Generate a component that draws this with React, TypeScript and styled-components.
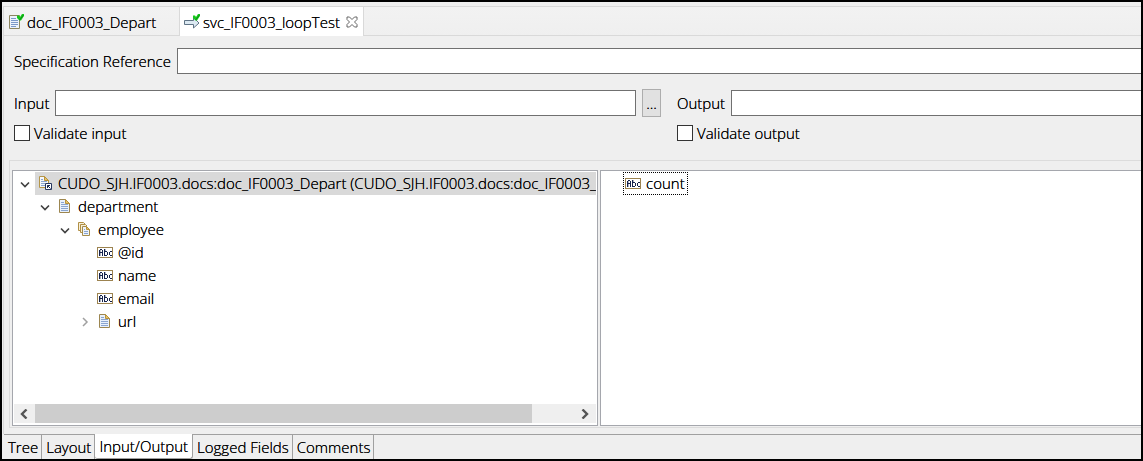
import React from 'react';
import styled, { createGlobalStyle, css } from 'styled-components';

const Global = createGlobalStyle`
  *, *::before, *::after { box-sizing: border-box; }
  body {
    margin: 0;
    background: #efefef;
    color: #000;
    font: 300 15px/22px "Open Sans", "Noto Sans CJK KR", sans-serif;
    text-shadow: 0 0 #000;
  }
  button, input { font: inherit; color: inherit; text-shadow: inherit; margin: 0; }
`;

const Frame = styled.div`
  display: flex;
  flex-direction: column;
  min-height: 100vh;
  border: 2px solid #000;
  padding: 4px 0 0 1px;
  overflow: hidden;
`;

const Editor = styled.section`
  flex: 1;
  display: flex;
  flex-direction: column;
  border-left: 1px solid #d9d9d9;
  border-top: 1px solid #d9d9d9;
`;

const EditorTabs = styled.div`
  display: flex;
  height: 29px;
  background: linear-gradient(#f2f2f2, #efefef);
  box-shadow: inset 0 -1px #d9d9d9;
`;

const EditorTab = styled.button<{ $active?: boolean }>`
  display: flex;
  align-items: center;
  gap: 3px;
  padding: 0 5px 0 4px;
  border: 0;
  background: transparent;
  white-space: nowrap;
  ${({ $active }) =>
    $active
      ? css`
          background: #fff;
          border: solid #d9d9d9;
          border-width: 0 1px;
        `
      : css`
          width: 175px;
        `}
`;

const CloseMark = styled.span`
  display: flex;
  margin-left: 3px;
`;

const Form = styled.div`
  display: grid;
  grid-template-columns: 647fr 464fr;
  column-gap: 16px;
  row-gap: 16px;
  padding: 12px 0 0 10px;
`;

const Field = styled.div<{ $wide?: boolean }>`
  display: flex;
  align-items: center;
  gap: 6px;
  height: 26px;
  min-width: 0;
  ${({ $wide }) => $wide && 'grid-column: 1 / -1;'}
`;

const FieldLabel = styled.label`
  flex: none;
  white-space: nowrap;
`;

const TextBox = styled.input<{ $open?: boolean }>`
  flex: 1;
  min-width: 0;
  height: 26px;
  padding: 0 4px;
  border: 1px solid #707070;
  ${({ $open }) => $open && 'border-right: 0;'}
  background: #fff;
  outline: 0;
`;

const BrowseButton = styled.button`
  width: 19px;
  height: 28px;
  padding: 0;
  border: 1px solid #adadad;
  background: #e1e1e1;
`;

const Check = styled.label`
  display: flex;
  align-items: center;
  gap: 4px;
  height: 22px;
  margin-top: -10px;
`;

const CheckBox = styled.input`
  appearance: none;
  width: 16px;
  height: 16px;
  border: 1px solid #333;
  background: #fff;
`;

const Group = styled.div`
  flex: 1;
  display: grid;
  grid-template-columns: 586fr 541fr;
  column-gap: 2px;
  margin: 16px 0 6px 5px;
  padding: 9px 0 1px 2px;
  border: solid #dcdcdc;
  border-width: 1px 0 1px 1px;
`;

const Pane = styled.div<{ $open?: boolean }>`
  display: flex;
  flex-direction: column;
  min-width: 0;
  padding: 1px;
  border: 1px solid #a5a7ad;
  ${({ $open }) => $open && 'border-right: 0;'}
  background: #fff;
`;

const Tree = styled.ul`
  flex: 1;
  margin: 0;
  padding: 0;
  overflow: hidden;
  list-style: none;
`;

const Row = styled.li<{ $level: number }>`
  display: flex;
  height: 23px;
  line-height: 20px;
  padding-left: ${({ $level }) => $level * 20}px;
`;

const Twisty = styled.span`
  flex: none;
  display: flex;
  align-items: center;
  justify-content: center;
  width: 21px;
`;

const Item = styled.span<{ $selected?: boolean; $focused?: boolean }>`
  flex: ${({ $selected }) => ($selected ? '1 0 auto' : 'none')};
  display: flex;
  align-items: center;
  gap: 5px;
  padding: 0 3px 1px 2px;
  background: ${({ $selected }) => ($selected ? '#d9d9d9' : 'transparent')};
  outline: ${({ $focused }) => ($focused ? '1px dotted #000' : '0')};
  outline-offset: -1px;
  white-space: nowrap;
`;

const ScrollBar = styled.div`
  display: flex;
  height: 19px;
  margin-bottom: 1px;
  background: #efefef;
`;

const ScrollButton = styled.button`
  display: flex;
  align-items: center;
  justify-content: center;
  width: 21px;
  padding: 0 2px 0 0;
  border: 0;
  background: transparent;
`;

const ScrollTrack = styled.div`
  flex: 1;
`;

const ScrollThumb = styled.div`
  width: 92%;
  height: 100%;
  background: #cdcdcd;
`;

const PageTabs = styled.div`
  display: flex;
  height: 25px;
  margin-left: 1px;
  border-top: 1px solid #a0a0a0;
`;

const PageTab = styled.button<{ $active?: boolean }>`
  padding: 0 3px 0 4px;
  border: 0;
  border-right: 1px solid #a0a0a0;
  background: transparent;
  white-space: nowrap;
  ${({ $active }) =>
    $active &&
    css`
      margin-top: -1px;
      padding: 0 4px;
      border-bottom: 1px solid #a0a0a0;
      border-radius: 0 0 3px 3px;
      background: #fff;
    `}
`;

const Tick = () => (
  <>
    <path d="M9 1.500h2l1 1.500 2-3h2v2l-3 4.500h-1.500L9 4z" fill="#16c81c" />
    <path d="M11.500 6 15.500 1" stroke="#0a8f14" fill="none" />
  </>
);

const DocTabIcon = () => (
  <svg width="16" height="16" viewBox="0 0 16 16">
    <path d="M1.500 1.500h10v13h-10z" fill="#edf3fb" stroke="#8d8660" />
    <path d="M3 4.500h5M3 6.500h7M3 8.500h7M3 10.500h7M3 12.500h5" stroke="#7c99c8" />
    <Tick />
  </svg>
);

const ServiceIcon = () => (
  <svg width="16" height="16" viewBox="0 0 16 16">
    <path d="M.5 6.500h9v-3l5.500 5.500-5.500 5v-3.500h-9z" fill="#dce9f2" stroke="#5f7385" />
    <Tick />
  </svg>
);

const CloseIcon = () => (
  <svg width="12" height="12" viewBox="0 0 12 12">
    <path
      d="M1 1h2.500L6 3.500 8.500 1H11v2.500L8.500 6 11 8.500V11H8.500L6 8.500 3.500 11H1V8.500L3.500 6 1 3.500z"
      fill="#fff"
      stroke="#666"
    />
  </svg>
);

const PageIcon = () => (
  <svg width="16" height="16" viewBox="0 0 16 16">
    <path d="M2.500 1.500h6l4 4v9h-10z" fill="#e9f1fb" stroke="#9c8650" />
    <path d="M8.500 1.500v4h4z" fill="#e5c36a" stroke="#b8923c" />
    <path d="M4 4.500h3M4 6.500h7M4 8.500h7M4 10.500h7M4 12.500h7" stroke="#8aa5d0" />
  </svg>
);

const PageRefIcon = () => (
  <svg width="16" height="16" viewBox="0 0 16 16">
    <path d="M2.500 1.500h5l4 4v7h-9z" fill="#f4f7fc" stroke="#b49548" />
    <path d="M7.500 1.500v4h4z" fill="#e5c36a" stroke="#b8923c" />
    <path d="M4 4.500h2M4 6.500h6M4 8.500h4M4 10.500h4" stroke="#8aa5d0" />
    <path d="M8.500 8.500h6v6h-6z" fill="#fff" stroke="#26365f" />
    <path d="M10.500 13v-2.500H13M10.500 10.500l3 3" fill="none" stroke="#17264f" />
  </svg>
);

const PagesIcon = () => (
  <svg width="16" height="16" viewBox="0 0 16 16">
    <path d="M3.500 9.500h-2v-8h5l1.500 1.500" fill="#f7efd8" stroke="#b08f45" />
    <path d="M5.500 11.500h-2v-8h5l1.500 1.500" fill="#f7efd8" stroke="#b08f45" />
    <path d="M5.500 5.500h4l3 3v6h-7z" fill="#edf3fb" stroke="#a58c4c" />
    <path d="M9.500 5.500v3h3z" fill="#e5c36a" stroke="#b8923c" />
    <path d="M7 8.500h1M7 10.500h4M7 12.500h4" stroke="#8aa5d0" />
  </svg>
);

const AbcIcon = () => (
  <svg width="16" height="16" viewBox="0 0 16 16" shapeRendering="crispEdges">
    <path d="M.5 3.500h15v10H.5z" fill="#fff" stroke="#9c8350" />
    <path
      d="M2.500 6v6M5.500 6v6M3 5.500h2M3 8.500h2M7.500 5v7M8 7.500h2M8 11.500h2M10.500 8v3M12.500 8v3M13 7.500h2M13 11.500h2"
      fill="none"
      stroke="#15224c"
    />
    <path d="M3.500 6v6M8.500 5v2" stroke="#15224c" opacity=".35" />
  </svg>
);

const paths = {
  down: 'M1 3.500 5 7.500 9 3.500',
  left: 'M7.500 0.500 3 5l4.500 4.500',
  right: 'M2.500 0.500 7 5 2.500 9.500',
  closed: 'M3 1l4 4-4 4',
};

const Chevron = ({ kind }: { kind: keyof typeof paths }) => (
  <svg width="10" height="10" viewBox="0 0 10 10">
    <path
      d={paths[kind]}
      fill="none"
      stroke={kind === 'closed' ? '#a0a0a0' : kind === 'down' ? '#404040' : '#555'}
      strokeWidth={kind === 'closed' ? 1.500 : kind === 'down' ? 1.600 : 2.400}
    />
  </svg>
);

type Node = {
  text: string;
  level: number;
  icon: React.ReactNode;
  twisty?: 'down' | 'closed';
  selected?: boolean;
};

const nodes: Node[] = [
  {
    text: 'CUDO_SJH.IF0003.docs:doc_IF0003_Depart (CUDO_SJH.IF0003.docs:doc_IF0003_Depart)',
    level: 0,
    icon: <PageRefIcon />,
    twisty: 'down',
    selected: true,
  },
  { text: 'department', level: 1, icon: <PageIcon />, twisty: 'down' },
  { text: 'employee', level: 2, icon: <PagesIcon />, twisty: 'down' },
  { text: '@id', level: 3, icon: <AbcIcon /> },
  { text: 'name', level: 3, icon: <AbcIcon /> },
  { text: 'email', level: 3, icon: <AbcIcon /> },
  { text: 'url', level: 3, icon: <PageIcon />, twisty: 'closed' },
];

const pages = ['Tree', 'Layout', 'Input/Output', 'Logged Fields', 'Comments'];

export default function App() {
  return (
    <>
      <Global />
      <Frame>
        <Editor>
          <EditorTabs>
            <EditorTab>
              <DocTabIcon />
              doc_IF0003_Depart
            </EditorTab>
            <EditorTab $active>
              <ServiceIcon />
              svc_IF0003_loopTest
              <CloseMark>
                <CloseIcon />
              </CloseMark>
            </EditorTab>
          </EditorTabs>
          <Form>
            <Field $wide>
              <FieldLabel htmlFor="spec">Specification Reference</FieldLabel>
              <TextBox id="spec" $open />
            </Field>
            <Field>
              <FieldLabel htmlFor="input">Input</FieldLabel>
              <TextBox id="input" />
              <BrowseButton aria-label="Browse">...</BrowseButton>
            </Field>
            <Field>
              <FieldLabel htmlFor="output">Output</FieldLabel>
              <TextBox id="output" $open />
            </Field>
            <Check>
              <CheckBox type="checkbox" />
              Validate input
            </Check>
            <Check>
              <CheckBox type="checkbox" />
              Validate output
            </Check>
          </Form>
          <Group>
            <Pane>
              <Tree>
                {nodes.map((n) => (
                  <Row key={n.text} $level={n.level}>
                    <Twisty>{n.twisty && <Chevron kind={n.twisty} />}</Twisty>
                    <Item $selected={n.selected}>
                      {n.icon}
                      {n.text}
                    </Item>
                  </Row>
                ))}
              </Tree>
              <ScrollBar>
                <ScrollButton aria-label="Scroll left">
                  <Chevron kind="left" />
                </ScrollButton>
                <ScrollTrack>
                  <ScrollThumb />
                </ScrollTrack>
                <ScrollButton aria-label="Scroll right">
                  <Chevron kind="right" />
                </ScrollButton>
              </ScrollBar>
            </Pane>
            <Pane $open>
              <Tree>
                <Row $level={0}>
                  <Twisty />
                  <Item $focused>
                    <AbcIcon />
                    count
                  </Item>
                </Row>
              </Tree>
            </Pane>
          </Group>
        </Editor>
        <PageTabs>
          {pages.map((p) => (
            <PageTab key={p} $active={p === 'Input/Output'}>
              {p}
            </PageTab>
          ))}
        </PageTabs>
      </Frame>
    </>
  );
}
